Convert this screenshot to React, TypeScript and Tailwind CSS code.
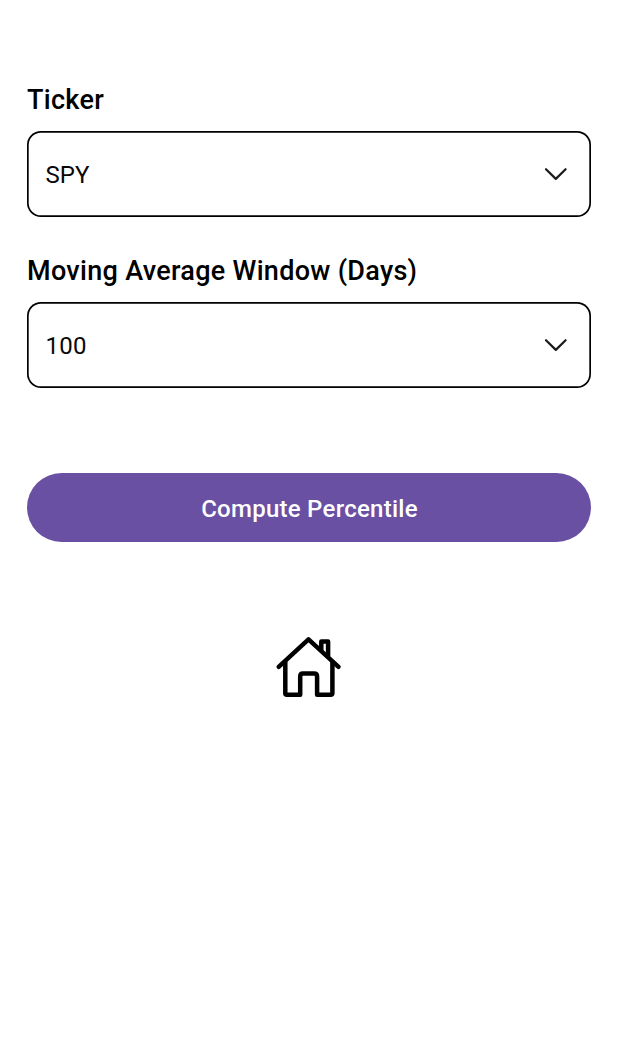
function Chevron() {
  return (
    <svg className="h-[16px] w-[26px] shrink-0" viewBox="0 0 26 16" fill="none" stroke="#1c1b1b" strokeWidth="2.2" strokeLinecap="round" strokeLinejoin="round">
      <path d="M3 3.2 12.8 12.9 22.6 3.2" />
    </svg>
  );
}

function Select({ value, className }: { value: string; className: string }) {
  return (
    <button
      type="button"
      className={`flex w-full items-center justify-between rounded-[14px] pr-[22px] pl-[18.5px] shadow-[inset_0_0_0_1.7px_#000] ${className}`}
    >
      <span className="pt-[2px] text-[24px] leading-[28px] text-[#080808]">{value}</span>
      <Chevron />
    </button>
  );
}

function HomeIcon() {
  return (
    <svg className="h-[66px] w-[68px]" viewBox="0 0 68 66" fill="none" stroke="#000" strokeWidth="4.5" strokeLinecap="round" strokeLinejoin="round">
      <path d="M3.7 32.8 33.5 5.3 63.5 32.8" />
      <path d="M10.3 28V59.3Q10.3 60.8 11.8 60.8H25.2V42.5Q25.2 39.6 27.9 39.6H39.1Q42.1 39.6 42.1 42.5V60.8H55.7Q57.4 60.8 57.4 59.1V28" />
      <path d="M46.3 15.5V7.4H53.1V22" />
    </svg>
  );
}

export default function App() {
  return (
    <main className="flex min-h-[1050px] w-full flex-col bg-white pt-[84px] pr-[51px] pl-[27px] font-['Roboto',sans-serif] text-black">
      <section className="flex flex-col">
        <h2 className="mb-[15px] text-[27px] leading-[32px] font-medium tracking-[0.3px]">Ticker</h2>
        <Select value="SPY" className="h-[85.5px] tracking-normal" />
      </section>
      <section className="mt-[38.5px] flex flex-col">
        <h2 className="mb-[15px] text-[27px] leading-[32px] font-medium tracking-[0.3px] whitespace-nowrap">Moving Average Window (Days)</h2>
        <Select value="100" className="h-[86px] tracking-[0.3px]" />
      </section>
      <button type="button" className="mt-[85px] flex h-[69px] w-full shrink-0 items-center justify-center rounded-full bg-[#6950a3] pt-[3px] pl-[1px] text-[24px] leading-[28px] font-medium tracking-[0.26px] text-white">
        Compute Percentile
      </button>
      <div className="mt-[92px] flex justify-center">
        <HomeIcon />
      </div>
    </main>
  );
}
